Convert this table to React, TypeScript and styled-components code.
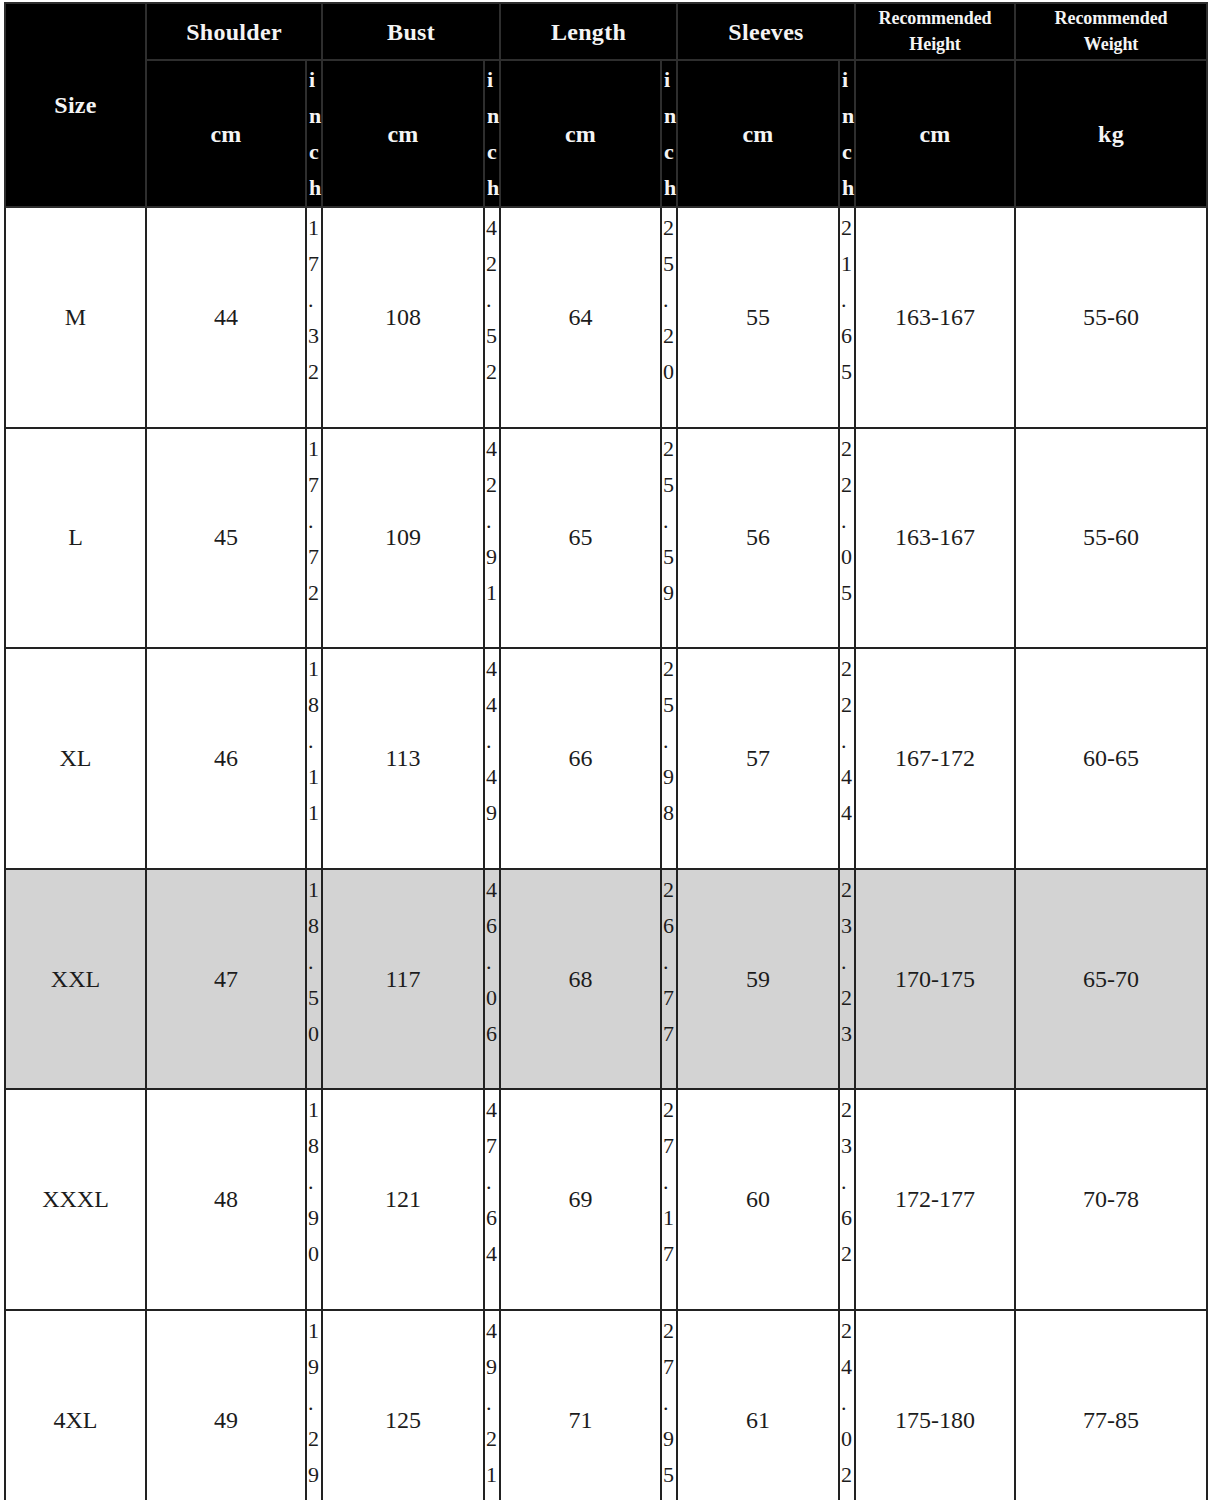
import React from "react";
import styled, { createGlobalStyle } from "styled-components";

const GlobalStyle = createGlobalStyle`
  html, body {
    margin: 0;
    padding: 0;
    background: #ffffff;
  }
  body, table, th, td {
    font-family: "Liberation Serif", "Times New Roman", serif;
  }
`;

type SizeRow = {
  size: string;
  shoulder: [string, string];
  bust: [string, string];
  length: [string, string];
  sleeves: [string, string];
  height: string;
  weight: string;
  shaded?: boolean;
};

const rows: SizeRow[] = [
  { size: "M", shoulder: ["44", "17.32"], bust: ["108", "42.52"], length: ["64", "25.20"], sleeves: ["55", "21.65"], height: "163-167", weight: "55-60" },
  { size: "L", shoulder: ["45", "17.72"], bust: ["109", "42.91"], length: ["65", "25.59"], sleeves: ["56", "22.05"], height: "163-167", weight: "55-60" },
  { size: "XL", shoulder: ["46", "18.11"], bust: ["113", "44.49"], length: ["66", "25.98"], sleeves: ["57", "22.44"], height: "167-172", weight: "60-65" },
  { size: "XXL", shoulder: ["47", "18.50"], bust: ["117", "46.06"], length: ["68", "26.77"], sleeves: ["59", "23.23"], height: "170-175", weight: "65-70", shaded: true },
  { size: "XXXL", shoulder: ["48", "18.90"], bust: ["121", "47.64"], length: ["69", "27.17"], sleeves: ["60", "23.62"], height: "172-177", weight: "70-78" },
  { size: "4XL", shoulder: ["49", "19.29"], bust: ["125", "49.21"], length: ["71", "27.95"], sleeves: ["61", "24.02"], height: "175-180", weight: "77-85" },
];

// column widths measured border to border
const colWidths = [141, 160, 16, 162, 16, 161, 16, 162, 16, 160, 192];

const Page = styled.div`
  padding: 2px 3px 0 4px;
`;

const Chart = styled.table`
  width: 1202px;
  table-layout: fixed;
  border-collapse: collapse;
  border-top: 1px solid #8a8a8a;
`;

const HeadCell = styled.th<{ $small?: boolean }>`
  background: #000;
  color: #f4f4f4;
  font-family: "Liberation Serif", "Times New Roman", serif;
  font-weight: 700;
  font-size: ${(p) => (p.$small ? "18px" : "24px")};
  line-height: ${(p) => (p.$small ? "26px" : "30px")};
  letter-spacing: ${(p) => (p.$small ? "-0.1px" : "0.3px")};
  text-align: center;
  vertical-align: middle;
  border: 2px solid #2e2e2e;
  padding: ${(p) => (p.$small ? "0 0 2px" : "0")};
`;

const HeadInch = styled(HeadCell)`
  font-size: 22px;
  line-height: 36px;
  text-align: left;
  padding-left: 2px;
`;

const BodyRow = styled.tr<{ $shaded?: boolean }>`
  height: 220.6px;
  background: ${(p) => (p.$shaded ? "#d3d3d3" : "#ffffff")};
`;

const Cell = styled.td`
  color: #1c1c1c;
  font-family: "Liberation Serif", "Times New Roman", serif;
  font-size: 24px;
  text-align: center;
  vertical-align: middle;
  border: 2px solid #222;
  padding: 0;
`;

const InchCell = styled(Cell)`
  font-size: 22px;
  line-height: 36px;
  text-align: left;
  vertical-align: top;
  padding: 2px 0 0 1px;
`;

// one character per line, the way the narrow inch column wraps
const Glyph = styled.span`
  display: block;
  height: 36px;
`;

const Stacked: React.FC<{ text: string }> = ({ text }) => (
  <>
    {text.split("").map((ch, i) => (
      <Glyph key={i}>{ch}</Glyph>
    ))}
  </>
);

const measures: Array<"shoulder" | "bust" | "length" | "sleeves"> = [
  "shoulder",
  "bust",
  "length",
  "sleeves",
];

const headings = ["Shoulder", "Bust", "Length", "Sleeves"];

export default function App() {
  return (
    <Page>
      <GlobalStyle />
      <Chart>
        <colgroup>
          {colWidths.map((w, i) => (
            <col key={i} style={{ width: w }} />
          ))}
        </colgroup>
        <thead>
          <tr style={{ height: 57 }}>
            <HeadCell rowSpan={2}>Size</HeadCell>
            {headings.map((h) => (
              <HeadCell key={h} colSpan={2}>
                {h}
              </HeadCell>
            ))}
            <HeadCell $small>
              Recommended
              <br />
              Height
            </HeadCell>
            <HeadCell $small>
              Recommended
              <br />
              Weight
            </HeadCell>
          </tr>
          <tr style={{ height: 147 }}>
            {headings.map((h) => (
              <React.Fragment key={h}>
                <HeadCell>cm</HeadCell>
                <HeadInch>
                  <Stacked text="inch" />
                </HeadInch>
              </React.Fragment>
            ))}
            <HeadCell>cm</HeadCell>
            <HeadCell>kg</HeadCell>
          </tr>
        </thead>
        <tbody>
          {rows.map((r) => (
            <BodyRow key={r.size} $shaded={r.shaded}>
              <Cell>{r.size}</Cell>
              {measures.map((m) => (
                <React.Fragment key={m}>
                  <Cell>{r[m][0]}</Cell>
                  <InchCell>
                    <Stacked text={r[m][1]} />
                  </InchCell>
                </React.Fragment>
              ))}
              <Cell>{r.height}</Cell>
              <Cell>{r.weight}</Cell>
            </BodyRow>
          ))}
        </tbody>
      </Chart>
    </Page>
  );
}
